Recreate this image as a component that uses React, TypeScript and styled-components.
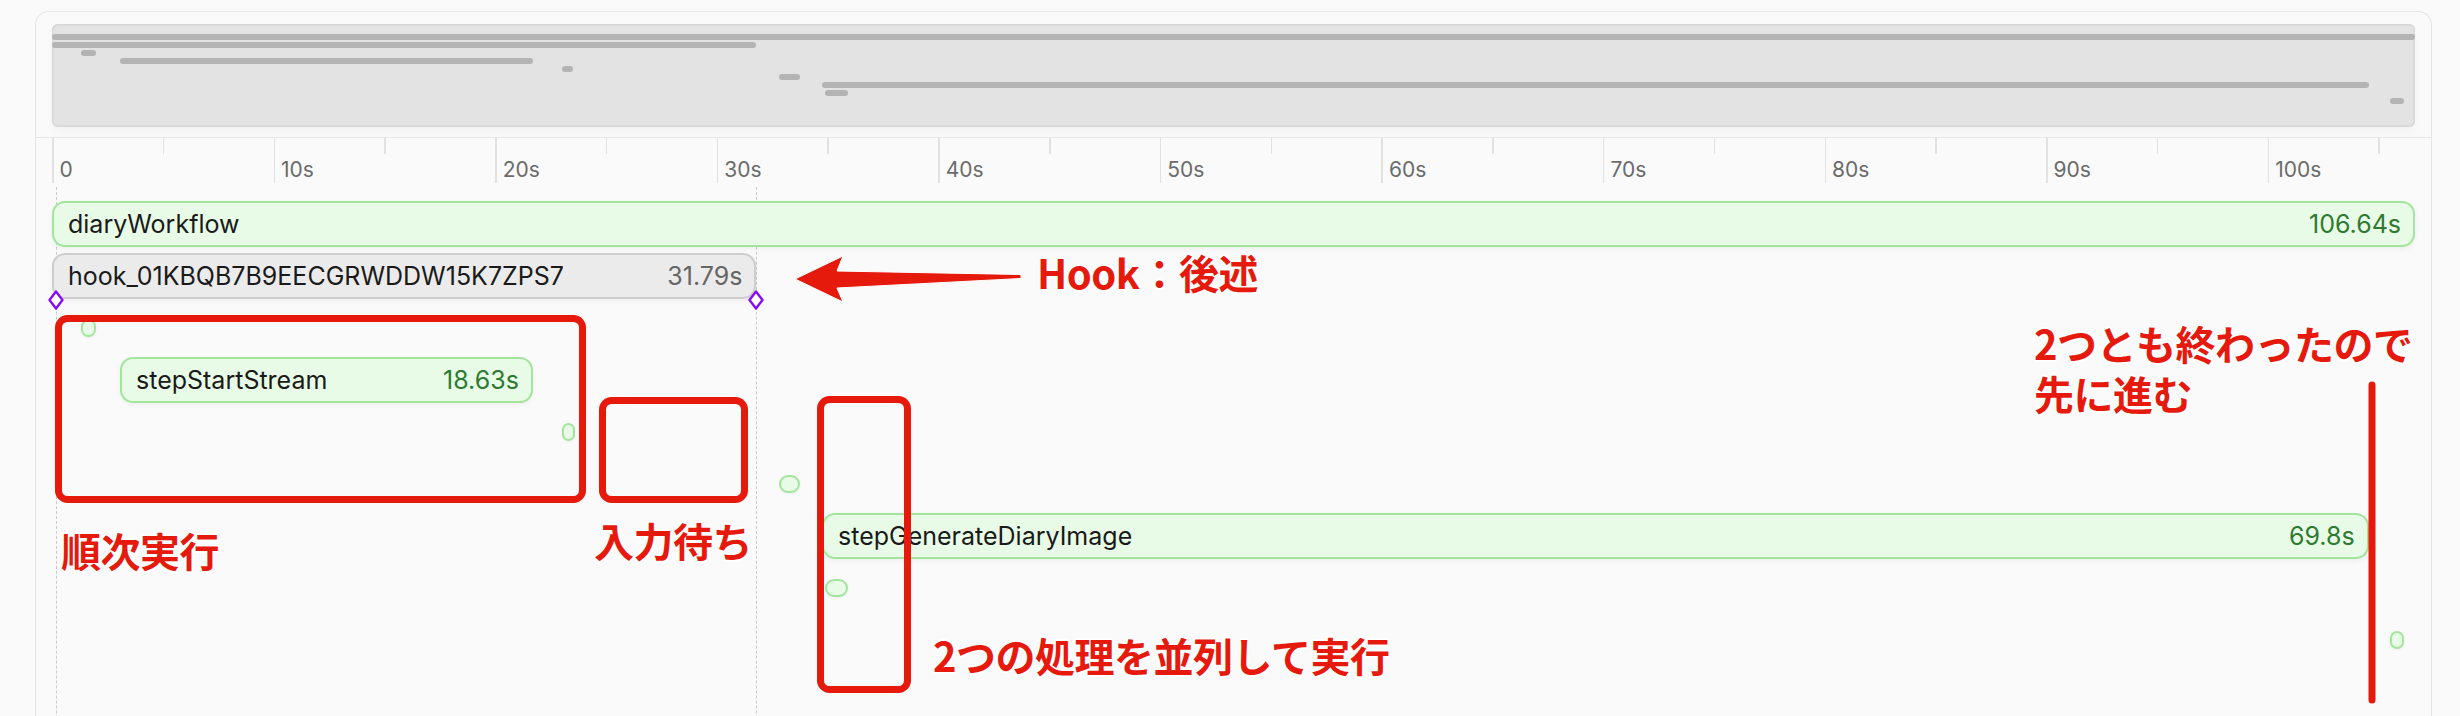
import React from 'react';
import styled, { createGlobalStyle } from 'styled-components';

// timeline scale: 106.64s spans the 2363px track
const TOTAL = 106.64;
const TRACK_WIDTH = 2363;
const toPx = (s: number) => (s * TRACK_WIDTH) / TOTAL;

type SpanKind = 'step' | 'hook' | 'dot';

type Span = {
  name?: string;
  start: number;
  duration: number;
  kind: SpanKind;
};

const spans: Span[] = [
  { name: 'diaryWorkflow', start: 0, duration: 106.64, kind: 'step' },
  { name: 'hook_01KBQB7B9EECGRWDDW15K7ZPS7', start: 0, duration: 31.79, kind: 'hook' },
  { start: 1.31, duration: 0.68, kind: 'dot' },
  { name: 'stepStartStream', start: 3.07, duration: 18.63, kind: 'step' },
  { start: 23.01, duration: 0.5, kind: 'dot' },
  { start: 32.8, duration: 0.95, kind: 'dot' },
  { name: 'stepGenerateDiaryImage', start: 34.75, duration: 69.8, kind: 'step' },
  { start: 34.9, duration: 1.04, kind: 'dot' },
  { start: 105.5, duration: 0.63, kind: 'dot' },
];

// hook start / end guides (seconds)
const guides = [0.16, 31.79];

const ticks: number[] = [];
for (let t = 0; t <= 105; t += 5) ticks.push(t);

const GlobalStyle = createGlobalStyle`
  html, body {
    margin: 0;
    background: #fafafa;
    overflow: hidden;
  }
  body {
    font-family: Inter, "Noto Sans", sans-serif;
  }
`;

const Page = styled.div`
  position: relative;
  box-sizing: border-box;
  height: 716px;
  padding: 11px 28px 0 35px;
  overflow: hidden;
`;

const Panel = styled.div`
  min-height: 760px;
  border: 1px solid #e6e6e6;
  border-bottom: none;
  border-radius: 14px 14px 0 0;
  background: #fafafa;
`;

const MinimapSection = styled.div`
  padding: 12px 16px 10px;
`;

const Minimap = styled.div`
  box-sizing: border-box;
  height: 103px;
  padding-top: 10px;
  display: flex;
  flex-direction: column;
  gap: 2px;
  background: #e3e3e3;
  border-radius: 6px;
  box-shadow: inset 0 0 0 1.5px #d6d6d6, 0 6px 10px rgba(0, 0, 0, 0.03);
  overflow: hidden;
`;

const MiniBar = styled.div`
  flex: none;
  height: 6px;
  border-radius: 3px;
  background: #b4b4b4;
`;

const RulerSection = styled.div`
  border-top: 1.5px solid #e6e6e6;
  padding: 0 16px;
`;

const Ruler = styled.div`
  display: flex;
  height: 45px;
`;

const TickSegment = styled.div`
  flex: none;
  display: flex;
  align-items: flex-start;
`;

const TickMark = styled.div<{ $major: boolean }>`
  flex: none;
  width: 1.5px;
  height: ${({ $major }) => ($major ? '45px' : '16px')};
  background: #e2e2e2;
`;

const TickLabel = styled.span`
  margin: 21px 0 0 6px;
  font-size: 21px;
  line-height: 1;
  color: #6b6b6b;
  white-space: nowrap;
`;

const TrackSection = styled.div`
  padding: 18px 16px 0;
`;

const Track = styled.div`
  position: relative;
  display: flex;
  flex-direction: column;
  gap: 6px;
`;

const Row = styled.div`
  position: relative;
  z-index: 1;
  height: 46px;
  display: flex;
  align-items: center;
`;

const Bar = styled.div<{ $kind: SpanKind }>`
  flex: none;
  box-sizing: border-box;
  height: 46px;
  display: flex;
  align-items: center;
  justify-content: space-between;
  gap: 16px;
  padding: 0 12px 0 14px;
  border: 2px solid ${({ $kind }) => ($kind === 'hook' ? '#cdcdcd' : '#a3e59d')};
  border-radius: 13px;
  background: ${({ $kind }) => ($kind === 'hook' ? '#ebebeb' : '#e8fbe6')};
  box-shadow: 0 2px 5px rgba(0, 0, 0, 0.05);
  font-size: 25px;
  white-space: nowrap;
  overflow: hidden;
`;

const BarName = styled.span`
  color: #1a1a1a;
`;

const BarDuration = styled.span<{ $kind: SpanKind }>`
  color: ${({ $kind }) => ($kind === 'hook' ? '#666666' : '#2e7a32')};
`;

const Dot = styled.div`
  flex: none;
  box-sizing: border-box;
  height: 18px;
  min-width: 13px;
  border: 2px solid #a3e59d;
  border-radius: 9px;
  background: #e8fbe6;
  box-shadow: 0 1px 3px rgba(0, 0, 0, 0.05);
`;

const Guide = styled.div`
  position: absolute;
  top: -14px;
  bottom: -200px;
  width: 0;
  border-left: 1.5px dashed #cacaca;
  z-index: 0;
`;

const Marker = styled.svg`
  position: absolute;
  z-index: 2;
  overflow: visible;
`;

const Overlay = styled.svg`
  position: absolute;
  left: 0;
  top: 0;
  pointer-events: none;
  z-index: 5;
`;

const Note = styled.div`
  position: absolute;
  z-index: 6;
  font-family: "Noto Sans CJK JP", sans-serif;
  font-weight: 700;
  font-size: 40px;
  line-height: 50px;
  color: #e6190d;
  white-space: pre;
  letter-spacing: -0.5px;
  text-shadow: 2px 0 #fff, -2px 0 #fff, 0 2px #fff, 0 -2px #fff, 1.5px 1.5px #fff,
    -1.5px -1.5px #fff, 1.5px -1.5px #fff, -1.5px 1.5px #fff;
`;

const RED = '#e6190d';

const HookMarker = ({ x }: { x: number }) => (
  <Marker
    width="16"
    height="20"
    viewBox="0 0 16 20"
    style={{ left: x - 8, top: 99 - 10 }}
  >
    <path d="M8 1.5 L14.5 10 L8 18.5 L1.5 10 Z" fill="#fff" stroke="#8a0cf5" strokeWidth="2.4" strokeLinejoin="round" />
  </Marker>
);

const SpanRow = ({ span }: { span: Span }) => {
  const left = toPx(span.start);
  const width = toPx(span.duration);
  if (span.kind === 'dot') {
    return (
      <Row>
        <Dot style={{ marginLeft: left, width }} />
      </Row>
    );
  }
  return (
    <Row>
      <Bar $kind={span.kind} style={{ marginLeft: left, width }}>
        <BarName>{span.name}</BarName>
        <BarDuration $kind={span.kind}>{span.duration}s</BarDuration>
      </Bar>
    </Row>
  );
};

const Annotations = () => (
  <>
    <Overlay width="2460" height="716" viewBox="0 0 2460 716">
      <g fill="none" stroke={RED} strokeWidth="7">
        <rect x="58.5" y="318.5" width="524" height="181" rx="9" />
        <rect x="602.5" y="400.5" width="142" height="99" rx="9" />
        <rect x="820.5" y="399.5" width="87" height="290" rx="9" />
        <line x1="2372" y1="385" x2="2372" y2="700" strokeLinecap="round" />
      </g>
      <polygon
        points="795,279 843,256 837,271 1021,274.5 1021,278.5 837,288 843,302"
        fill={RED}
        stroke="#fff"
        strokeWidth="1"
        strokeLinejoin="round"
      />
    </Overlay>
    <Note style={{ left: 1037, top: 247 }}>Hook：後述</Note>
    <Note style={{ left: 61, top: 525 }}>順次実行</Note>
    <Note style={{ left: 594, top: 515 }}>入力待ち</Note>
    <Note style={{ left: 933, top: 630 }}>2つの処理を並列して実行</Note>
    <Note style={{ left: 2034, top: 318 }}>{'2つとも終わったので\n先に進む'}</Note>
  </>
);

const App = () => (
  <Page>
    <GlobalStyle />
    <Panel>
      <MinimapSection>
        <Minimap>
          {spans.map((s, i) => (
            <MiniBar key={i} style={{ marginLeft: toPx(s.start), width: Math.max(toPx(s.duration), 10) }} />
          ))}
        </Minimap>
      </MinimapSection>
      <RulerSection>
        <Ruler>
          {ticks.map((t) => (
            <TickSegment key={t} style={{ width: toPx(Math.min(t + 5, TOTAL) - t) }}>
              <TickMark $major={t % 10 === 0} />
              {t % 10 === 0 && <TickLabel>{t === 0 ? '0' : `${t}s`}</TickLabel>}
            </TickSegment>
          ))}
        </Ruler>
      </RulerSection>
      <TrackSection>
        <Track>
          {guides.map((g) => (
            <Guide key={g} style={{ left: toPx(g) }} />
          ))}
          {guides.map((g) => (
            <HookMarker key={g} x={toPx(g)} />
          ))}
          {spans.map((s, i) => (
            <SpanRow key={i} span={s} />
          ))}
        </Track>
      </TrackSection>
    </Panel>
    <Annotations />
  </Page>
);

export default App;
